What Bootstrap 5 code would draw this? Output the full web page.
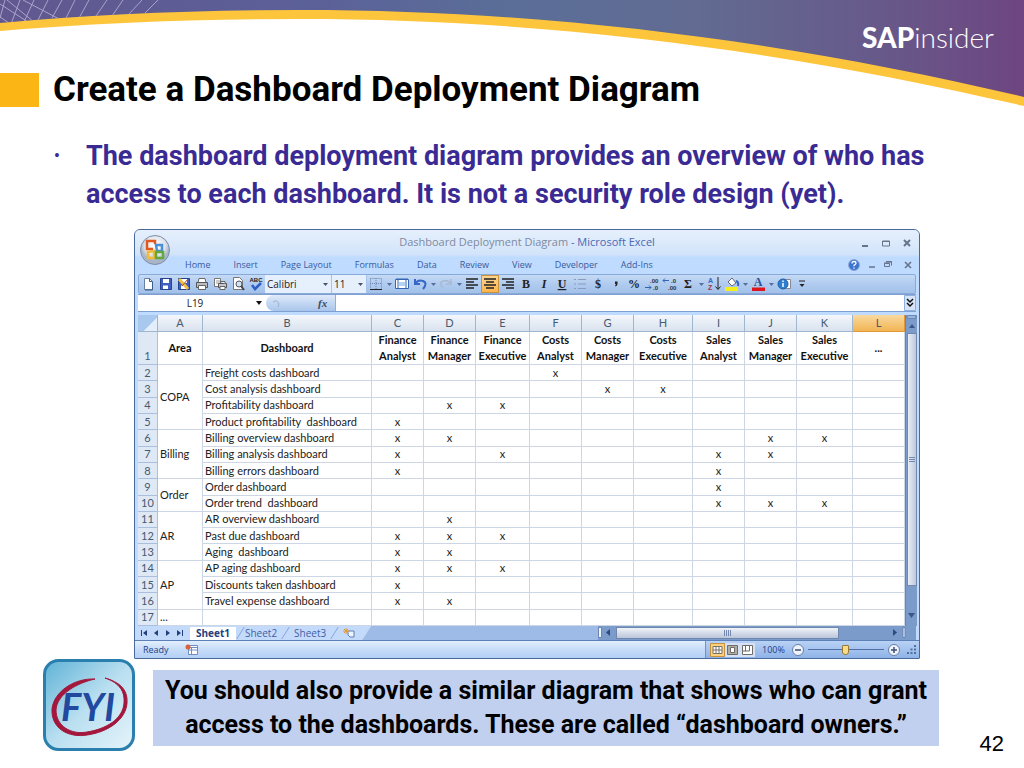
<!DOCTYPE html>
<html lang="en">
<head>
<meta charset="utf-8">
<meta name="viewport" content="width=device-width, initial-scale=1">
<title>Create a Dashboard Deployment Diagram</title>
<link href="https://cdn.jsdelivr.net/npm/bootstrap@5.3.0/dist/css/bootstrap.min.css" rel="stylesheet">
<style>
  :root { --head: Roboto, "Liberation Sans", sans-serif; --ui: "Open Sans", sans-serif; --sheet: Lato, sans-serif; --ink: #1f3f8a; }
  body { background: #fff; color: #000; font-family: var(--head); }
  .banner { position: absolute; top: 0; left: 0; width: 100%; height: 108px; z-index: -1; }
  .brand { height: 73px; padding: 16px 30px 0 0; font: 300 28px/42px Lato, sans-serif; }
  .brand strong { font-weight: 900; }
  .slide-title { font: bold 35px/34px var(--head); margin: 0 0 0 14px; }
  .title-block { width: 39px; height: 34px; background: #fbb615; }
  .points { padding: 30px 40px 0 86px; margin: 0 0 16px; color: #3a2b94; font: bold 27px/38px var(--head); list-style: none; }
  .points li::before { content: "•"; float: left; margin-left: -32px; font-size: 16px; }
  .excel { margin: 0 104px 0 134px; border: 1px solid #4a6a9c; border-radius: 6px 6px 1px 1px; background: #bfdbff; padding: 0 3px; color: var(--ink); font-family: var(--ui); }
  .excel button { border: 0; background: none; padding: 0; color: inherit; display: flex; align-items: center; justify-content: center; flex: none; }
  .excel svg { display: block; flex: none; }
  .caption-area { background: linear-gradient(#e6f0fc, #d2e4fa 55%, #bfdbff 62%); margin: 0 -3px; padding: 0 3px; border-radius: 5px 5px 0 0; }
  .win-title { height: 25px; font-size: 11px; color: #4a68b5; }
  .win-title span { color: #7e8aa0; }
  .orb { position: absolute; left: 4px; top: 4px; }
  .win-btns { position: absolute; right: 3px; top: 5px; gap: 3px; }
  .win-btns button { width: 18px; height: 16px; }
  .tabs { height: 19px; padding-left: 47px; gap: 23px; font-size: 9px; }
  .tabs a { color: #3a5a9c; text-decoration: none; }
  .tools { height: 20px; border: 1px solid #88aad8; border-radius: 2px; background: linear-gradient(#c5daf5, #b0cbef 50%, #a3c1e9); }
  .tools .tb { width: 18px; height: 18px; }
  .tools .dd { width: 8px; height: 18px; }
  .tools .on { background: linear-gradient(#fcd592, #fbb44d); border: 1px solid #c8923c; }
  .tools select { height: 18px; border: 0; border-right: 1px solid #a9c4ea; padding: 0 2px; appearance: none; border-radius: 0; font-size: 10px; color: #222; background: #e6f0fd url("data:image/svg+xml,%3Csvg xmlns='http://www.w3.org/2000/svg' width='5' height='3'%3E%3Cpath d='M0 0h5L2.500 3z' fill='%23456'/%3E%3C/svg%3E") no-repeat right 3px center; }
  .fbar { height: 18px; border: 1px solid #7e9fd0; border-width: 1px 0; background: #fff; }
  .fbar input { border: 0; padding: 0; font-size: 10px; color: #222; background: #fff; min-width: 0; }
  .fx { width: 70px; border-right: 1px solid #8fb0dd; border-radius: 9px 0 0 9px; background: linear-gradient(#dfeafa, #a9c5ec); padding: 0 4px 0 6px; }
  .sheet-area { margin-top: 3px; background: #fff; }
  .grid { table-layout: fixed; width: 100%; height: 311px; border-collapse: separate; border-spacing: 0; font: 11px/14px var(--sheet); color: #222; background: #fff; }
  .grid th, .grid td { padding: 0 2px; border: 0 solid #cdd6e4; border-width: 0 1px 1px 0; white-space: nowrap; }
  .grid thead th { height: 17px; background: linear-gradient(#f4f7fb, #d9e2ee); border-color: #9eb6ce; text-align: center; font-weight: normal; color: #465a70; }
  .grid thead th.sel { background: linear-gradient(#f9d99f, #f1b453); border-color: #e0963a; }
  .grid tbody th[scope=row] { background: #dfe9f6; border-color: #a9bfdd; text-align: center; font-weight: normal; color: #465a70; }
  .grid .heads { height: 32px; }
  .grid .heads th { padding: 0; text-align: center; font-weight: bold; color: #111; line-height: 16px; }
  .grid .heads th[scope=row] { vertical-align: bottom; font-weight: normal; color: #465a70; }
  .grid .hit { text-align: center; }
  .grid thead .corner { background: linear-gradient(135deg, #a9c8ee 62%, #e4eefb 63%); }
  .vscroll { width: 12px; background: #7b9bcb; border-left: 1px solid #6885b5; }
  .vthumb { width: 10px; height: 253px; background: linear-gradient(90deg, #e8edf5, #bcc9dc); border: 1px solid #7389ad; }
  .foot { height: 14px; background: #9dbbe6; font-size: 10px; }
  .foot nav { background: #c4dafa; height: 14px; clip-path: polygon(0 0, 100% 0, calc(100% - 9px) 100%, 0 100%); }
  .foot nav button { width: 12px; height: 14px; }
  .foot nav a { color: #3f5fa5; text-decoration: none; line-height: 13px; }
  .foot nav a.cur { background: #fff; font-weight: bold; color: #23407c; padding: 0 6px; }
  .foot nav i { width: 1px; height: 12px; background: #86a5d5; transform: skewX(-32deg); }
  .hscroll { width: 318px; background: #7b9bcb; }
  .hthumb { width: 223px; height: 12px; background: linear-gradient(#f0f3f8, #b9c6da); border: 1px solid #6f86ad; }
  .status { height: 18px; margin: 0 -3px; border-top: 1px solid #5c80b8; background: linear-gradient(#e3effe, #c7dcf8 50%, #b3cff5); font-size: 9px; }
  .zoomer { background: linear-gradient(#b9d2f5, #8fb3e8); border-left: 1px solid #6f93c9; width: 214px; gap: 7px; padding: 0 3px 0 4px; }
  .zoomer input { appearance: none; width: 76px; height: 1px; background: #4f6fa5; flex: none; }
  .zoomer input::-webkit-slider-thumb { appearance: none; width: 7px; height: 10px; background: #f7dc8a; border: 1px solid #9a7a35; border-radius: 1px 1px 3px 3px; }
  .note-row { padding-left: 43px; }
  .callout { background: #c0d0ee; font: bold 25px/34px var(--head); padding: 4px 0; margin: 11px 85px 0 18px; min-height: 76px; }
  .page-no { position: absolute; right: 20px; bottom: -6px; font: 22px/26px "Liberation Sans", sans-serif; }
</style>
</head>
<body>
<svg class="banner" viewBox="0 0 1024 108" preserveAspectRatio="none" aria-hidden="true">
  <defs>
    <linearGradient id="sky"><stop offset="0" stop-color="#61588f"/><stop offset=".28" stop-color="#5c5f98"/><stop offset=".5" stop-color="#5a6e98"/><stop offset=".68" stop-color="#626b92"/><stop offset=".86" stop-color="#67598a"/><stop offset="1" stop-color="#6e4580"/></linearGradient>
    <clipPath id="above"><path d="M0 0H1024V97C800 44 560 10 300 10Q140 10 0 23z"/></clipPath>
  </defs>
  <path d="M0 0H1024V100C800 47 560 13 300 13Q140 13 0 26z" fill="url(#sky)"/>
  <g clip-path="url(#above)" stroke="#a9a3cc" stroke-width="1" fill="none">
    <path d="M5 0L0 18M20 0L11 24M34 0L24 22M48 0L38 20M62 0L52 18M75 0L66 18M89 0L78 20M107 0L96 16M123 0L112 16M142 0L129 14M158 0L145 13M0 17L9 23M7 0L34 22M23 0L61 20M0 4L28 22"/>
  </g>
  <path d="M0 23Q140 10 300 10C560 10 800 44 1024 97V106C800 54 560 19 300 19Q140 19 0 31z" fill="#fdc53c"/>
</svg>

<header class="brand d-flex justify-content-end text-white"><div><strong>SAP</strong>insider</div></header>

<main>
  <div class="d-flex align-items-center">
    <div class="title-block"></div>
    <h1 class="slide-title">Create a Dashboard Deployment Diagram</h1>
  </div>
  <ul class="points"><li>The dashboard deployment diagram provides an overview of who has<br>access to each dashboard. It is not a security role design (yet).</li></ul>

  <section class="excel" aria-label="Dashboard Deployment Diagram workbook">
    <div class="caption-area position-relative">
      <svg class="orb" width="32" height="32" viewBox="0 0 32 32"><defs><radialGradient id="orbg" cy=".35"><stop offset="0" stop-color="#fff"/><stop offset=".7" stop-color="#dfe4ec"/><stop offset="1" stop-color="#a9b5c8"/></radialGradient></defs><circle cx="16" cy="16" r="14.500" fill="url(#orbg)" stroke="#7f8ea8"/><g fill="none" stroke-width="2.500"><path d="M14 15H8V7h8v3" stroke="#e2571c"/><path d="M17 11h6v6h-5z" stroke="#4a8fd6"/><path d="M15 17v7H9v-6z" stroke="#f2bb33"/><path d="M17 18h7v6h-7z" stroke="#62a83c"/></g></svg>
      <div class="win-title d-flex align-items-center justify-content-center"><div><span>Dashboard Deployment Diagram</span> - Microsoft Excel</div></div>
      <div class="win-btns d-flex">
        <button aria-label="Minimize"><svg width="8" height="8"><path d="M1 7h6" stroke="#66748c" stroke-width="2"/></svg></button>
        <button aria-label="Restore"><svg width="8" height="7"><path d="M.500 1h7v5h-7zM0 1.500h8" fill="none" stroke="#66748c"/></svg></button>
        <button aria-label="Close"><svg width="8" height="8"><path d="M1 1l6 6M7 1L1 7" stroke="#66748c" stroke-width="2"/></svg></button>
      </div>
      <div class="d-flex align-items-center">
        <nav class="tabs d-flex align-items-center flex-grow-1"><a href="#">Home</a><a href="#">Insert</a><a href="#">Page Layout</a><a href="#">Formulas</a><a href="#">Data</a><a href="#">Review</a><a href="#">View</a><a href="#">Developer</a><a href="#">Add-Ins</a></nav>
        <div class="d-flex gap-2 pe-1 align-items-center">
          <button aria-label="Help"><svg width="12" height="12"><circle cx="6" cy="6" r="5.500" fill="#3c74d0" stroke="#90a8d4"/><path d="M4 4.500q0-2 2-2t2 1.800q0 1-2 2v1M6 8.500v1.300" stroke="#fff" stroke-width="1.300" fill="none"/></svg></button>
          <button aria-label="Minimize workbook"><svg width="8" height="8"><path d="M1 6h6" stroke="#66748c" stroke-width="1.500"/></svg></button>
          <button aria-label="Restore workbook"><svg width="8" height="7"><path d="M.500 2.500h5v3h-5zM2 .500h5.500v4M0 2h6M2 1h6" fill="none" stroke="#66748c"/></svg></button>
          <button aria-label="Close workbook" class="ms-1"><svg width="8" height="8"><path d="M1 1l6 6M7 1L1 7" stroke="#66748c" stroke-width="1.600"/></svg></button>
        </div>
      </div>
    </div>

    <div class="tools d-flex align-items-center" id="tools"></div>

    <div class="fbar d-flex align-items-stretch">
      <input class="text-center" size="17" value="L19" aria-label="Name box">
      <button aria-label="Names" class="px-1"><svg width="6" height="4"><path d="M0 0h6L3 4z" fill="#111"/></svg></button>
      <div class="fx d-flex align-items-center justify-content-between"><svg width="9" height="9"><path d="M1 3q4-3 6 2l-1 3" fill="none" stroke="#9db1cf"/></svg><svg width="14" height="14" viewBox="0 0 14 14"><text x="1" y="11" font-family="Liberation Serif, serif" font-style="italic" font-weight="bold" font-size="11" fill="#3c4a60">fx</text></svg></div>
      <input class="flex-grow-1" aria-label="Formula">
      <button aria-label="Expand formula bar"><svg width="12" height="16"><path d="M.500 .500h11v15H.500z" fill="#d5e4f8" stroke="#8fb0dd"/><path d="M3 4l3 3 3-3M3 8l3 3 3-3" stroke="#111" stroke-width="1.500" fill="none"/></svg></button>
    </div>

    <div class="d-flex sheet-area">
      <table class="grid">
        <colgroup><col width="20"><col width="45"><col width="169"><col width="52"><col width="52"><col width="54"><col width="52"><col width="52"><col width="59"><col width="52"><col width="52"><col width="56"><col width="52"></colgroup>
        <thead><tr><th class="corner"></th><th>A</th><th>B</th><th>C</th><th>D</th><th>E</th><th>F</th><th>G</th><th>H</th><th>I</th><th>J</th><th>K</th><th class="sel">L</th></tr></thead>
        <tbody id="rows"><tr class="heads"><th scope="row">1</th><th>Area</th><th>Dashboard</th><th>Finance<br>Analyst</th><th>Finance<br>Manager</th><th>Finance<br>Executive</th><th>Costs<br>Analyst</th><th>Costs<br>Manager</th><th>Costs<br>Executive</th><th>Sales<br>Analyst</th><th>Sales<br>Manager</th><th>Sales<br>Executive</th><th>...</th></tr></tbody>
      </table>
      <div class="vscroll d-flex flex-column align-items-center flex-shrink-0">
        <svg width="11" height="18"><path d="M1 1h9v2H1z" fill="#e8f1fd" stroke="#5577aa"/><path d="M3 13h6L6 9z" fill="#3b568c"/></svg>
        <div class="vthumb d-flex align-items-center justify-content-center"><svg width="6" height="6"><path d="M0 .500h6M0 2.500h6M0 4.500h6" stroke="#7388ac"/></svg></div>
        <svg class="mt-auto mb-2" width="7" height="5"><path d="M0 0h7L3.500 5z" fill="#3b568c"/></svg>
      </div>
    </div>

    <div class="foot d-flex justify-content-between">
      <nav class="d-flex align-items-center gap-1 pe-3">
        <div class="d-flex">
          <button aria-label="First sheet"><svg width="7" height="6"><path d="M0 0h1v6H0zM6 0v6L2 3z" fill="#23407c"/></svg></button>
          <button aria-label="Previous sheet"><svg width="5" height="6"><path d="M4 0v6L0 3z" fill="#23407c"/></svg></button>
          <button aria-label="Next sheet"><svg width="5" height="6"><path d="M0 0v6l4-3z" fill="#23407c"/></svg></button>
          <button aria-label="Last sheet"><svg width="7" height="6"><path d="M5 0h1v6H5zM0 0v6l4-3z" fill="#23407c"/></svg></button>
        </div>
        <a href="#" class="cur">Sheet1</a><i></i><a href="#">Sheet2</a><i class="mx-1"></i><a href="#">Sheet3</a><i class="mx-1"></i>
        <button aria-label="Insert sheet"><svg width="13" height="11"><path d="M5 3h6v6H7l-2-2z" fill="#eef5ff" stroke="#5b7fb8"/><path d="M3 0v6M0 3h6M1 1l4 4M5 1L1 5" stroke="#e89a2c"/></svg></button>
      </nav>
      <div class="hscroll d-flex align-items-center">
        <svg width="18" height="14"><path d="M.500 1.500h3v10h-3z" fill="#eef5ff" stroke="#6885b5"/><path d="M12 3v7L8 6.500z" fill="#2f4a80"/></svg>
        <div class="hthumb d-flex align-items-center justify-content-center"><svg width="7" height="6"><path d="M.500 0v6M2.500 0v6M4.500 0v6M6.500 0v6" stroke="#7388ac"/></svg></div>
        <svg class="ms-auto me-2" width="17" height="14"><path d="M2 3v7l4-3.500z" fill="#2f4a80"/><path d="M12 1.500h2v10h-2z" fill="#eef5ff" stroke="#6885b5"/></svg>
      </div>
    </div>

    <div class="status d-flex justify-content-between align-items-stretch">
      <div class="d-flex align-items-center gap-3 ps-2"><span>Ready</span><button aria-label="Record macro"><svg width="13" height="11"><path d="M3.500 1.500h9v9h-9zM3 3.500h10M3 6h10M6.500 3v7" fill="#fff" stroke="#6f8fc4"/><circle cx="3" cy="3" r="2.500" fill="#d9603b"/></svg></button></div>
      <div class="zoomer d-flex align-items-center">
        <div class="d-flex">
          <button aria-label="Normal"><svg width="15" height="14"><path d="M.500 .500h14v13H.500z" fill="#fbd07e" stroke="#c8923c"/><path d="M3 3.500h9v7H3zM3 7h9M6 3v7M9 3v7" fill="#fff" stroke="#77726a"/></svg></button>
          <button aria-label="Page layout"><svg width="15" height="14"><path d="M0 0h15v14H0z" fill="#d5e2f5"/><path d="M2.500 2.500h10v9h-10z" fill="#b0ada6" stroke="#6f6d69"/><path d="M5.500 4.500h4v5h-4z" fill="#fff" stroke="#6f6d69"/></svg></button>
          <button aria-label="Page break"><svg width="15" height="14"><path d="M0 0h15v14H0z" fill="#d5e2f5"/><path d="M2.500 2.500h10v9h-10zM5.500 2v6H2M9.500 2v6H5" fill="#fff" stroke="#6f6d69"/></svg></button>
        </div>
        <span>100%</span>
        <div class="d-flex align-items-center">
          <button aria-label="Zoom out"><svg width="12" height="12"><circle cx="6" cy="6" r="5.500" fill="#eff4fb" stroke="#667fa8"/><path d="M3 6h6" stroke="#3c4f74" stroke-width="1.500"/></svg></button>
          <input type="range" value="50" aria-label="Zoom" class="mx-1">
          <button aria-label="Zoom in"><svg width="12" height="12"><circle cx="6" cy="6" r="5.500" fill="#eff4fb" stroke="#667fa8"/><path d="M3 6h6M6 3v6" stroke="#3c4f74" stroke-width="1.500"/></svg></button>
        </div>
        <svg class="ms-auto mt-auto mb-1" width="9" height="9" fill="#50709f"><path d="M7 0h2v2H7zM7 3.500h2v2H7zM3.500 3.500h2v2h-2zM7 7h2v2H7zM3.500 7h2v2h-2zM0 7h2v2H0z"/></svg>
      </div>
    </div>
  </section>

  <div class="d-flex align-items-start position-relative note-row">
    <svg class="flex-shrink-0" width="92" height="92" viewBox="0 0 92 92" role="img" aria-label="FYI">
      <defs><linearGradient id="fy" x1="0" y1="0" x2="1" y2="1"><stop offset="0" stop-color="#5fb2d6"/><stop offset=".5" stop-color="#b9dff0"/><stop offset="1" stop-color="#e6f4fa"/></linearGradient></defs>
      <rect x="1.500" y="1.500" width="89" height="89" rx="14" fill="url(#fy)" stroke="#2b7fae" stroke-width="3"/>
      <path d="M52 20C32 19 11 32 9 50C8 70 26 79 44 76C66 73 83 60 84 44C85 30 76 23 62 19C77 24 82 33 81 44C80 60 63 70 44 73C28 76 13 67 13 51C14 35 34 24 52 20z" fill="#a3173d" stroke="#a3173d" stroke-width="1"/>
      <text x="45" y="62" text-anchor="middle" font-family="Lato, sans-serif" font-weight="bold" font-style="italic" font-size="38" fill="#2149a0">FYI</text>
    </svg>
    <div class="callout flex-grow-1 text-center">You should also provide a similar diagram that shows who can grant<br>access to the dashboards. These are called “dashboard owners.”</div>
    <div class="page-no">42</div>
  </div>
</main>

<script>
  // Toolbar: [label, svg body, state]; a label alone is a small drop-down arrow
  const glyph = (t, extra) => `<text x="8" y="12" text-anchor="middle" font-family="Liberation Serif, serif" font-weight="bold" font-size="12" fill="#222" ${extra || ''}>${t}</text>`;
  const digits = (x, y, t) => `<text x="${x}" y="${y}" font-family="Liberation Sans, sans-serif" font-weight="bold" font-size="6" fill="#333">${t}</text>`;
  const page = '<path d="M4.500 2.500h5l3 3v8h-8z" fill="#fff" stroke="#6b7f9f"/><path d="M9.500 2.500v3h3M12.500 6v8H5" fill="none" stroke="#3d5d90"/>';
  const disk = '<path d="M2.500 2.500h11v11h-11z" fill="#3f5fc0" stroke="#27418f"/><path d="M5 3h6v4H5zM5 9.500h5V13H5z" fill="#fff"/>';
  const lines = d => `<path d="${d}" stroke="#222" stroke-width="1.500"/>`;
  const tools = [
    ['New', page], ['Save', disk], ['Save as', disk + '<path d="M3 3l9 10" stroke="#f0c040" stroke-width="3"/><path d="M12 3L6 10" stroke="#b24a2a"/>'],
    ['Print', '<path d="M5 2.500h6l1 4H4z" fill="#fff" stroke="#666"/><path d="M2.500 6.500h11v5h-11z" fill="#b9bcc3" stroke="#555"/><path d="M4.500 9.500h7v4h-7z" fill="#fff" stroke="#666"/>'],
    ['Quick print', '<path d="M2.500 2.500h6v8h-6z" fill="#fff" stroke="#777"/><path d="M4 5h4M4 7h4" stroke="#999"/><path d="M6.500 7.500h8v4h-8z" fill="#c4c7cd" stroke="#555"/><path d="M8 5.500h5v2M8 10.500h5v3H8z" fill="#fff" stroke="#666"/>'],
    ['Print preview', '<path d="M3.500 1.500h6l3 3v9h-9z" fill="#fff" stroke="#777"/><circle cx="9" cy="8" r="3" fill="#cfe4fa" stroke="#555"/><path d="M11 10l3 4" stroke="#444" stroke-width="2"/>'],
    ['Spelling', '<text x="8" y="6" text-anchor="middle" font-family="Liberation Sans, sans-serif" font-weight="bold" font-size="6" fill="#222">ABC</text><path d="M4 9l3 4 6-6" stroke="#2f5fc4" stroke-width="2.500" fill="none"/>'],
    ['select', 'Font', 'Calibri', 67], ['select', 'Size', '11', 35],
    ['Borders', '<path d="M2.500 2.500h11v10M2.500 2.500v10M8 2v11M2 7.500h12" stroke="#6f87b0" stroke-dasharray="1 1" fill="none"/><path d="M2 13.500h12" stroke="#222"/>'], ['Border styles'],
    ['Merge', '<path d="M1.500 3.500h13v9h-13z" fill="#fff" stroke="#3566b5"/><path d="M4 4v8M12 4v8M2 3h12" stroke="#3566b5"/><path d="M5 6h6v4H5z" fill="#b6d1f5"/>'],
    ['Undo', '<path d="M3 3v5h5M3 8q3-5 8-3t0 8" fill="none" stroke="#3566c8" stroke-width="2"/>'], ['Undo list'],
    ['Redo', '<path d="M13 3v5H8M13 8q-3-5-8-3t0 7" fill="none" stroke="#a9b9d2" stroke-width="1.500"/>'], ['Redo list'],
    ['Align left', lines('M2 3h12M2 6h8M2 9h12M2 12h8')], ['Center', lines('M2 3h12M4 6h8M2 9h12M4 12h8'), 'on'], ['Align right', lines('M2 3h12M6 6h8M2 9h12M6 12h8')],
    ['Bold', glyph('B')], ['Italic', glyph('I', 'font-style="italic"')], ['Underline', glyph('U', 'text-decoration="underline"')],
    ['Bullets', '<path d="M6 3.500h8M6 8h8M6 12.500h8M2 3.500h2M2 8h2M2 12.500h2" stroke="#8c9cb8"/>'],
    ['Currency', glyph('$')], ['Comma', '<path d="M7 5.500h2.500v2.500q0 1.500-2 2.500l-.500-.800q1-.600 1-1.400H7z" fill="#222"/>'], ['Percent', glyph('%')],
    ['Increase decimal', digits(6, 7, '.00') + digits(9, 14, '.0') + '<path d="M1 11.500h6M5 9.500l2 2-2 2" stroke="#3465b5" fill="none"/>'],
    ['Decrease decimal', digits(9, 7, '.0') + digits(6, 14, '.00') + '<path d="M1 4.500h6M3 2.500l-2 2 2 2" stroke="#3465b5" fill="none"/>'],
    ['Sum', glyph('Σ')], ['Sum list'],
    ['Sort', '<text x="2" y="7" font-family="Liberation Sans, sans-serif" font-size="7" font-weight="bold" fill="#3566c8">A</text><text x="2" y="14" font-family="Liberation Sans, sans-serif" font-size="7" font-weight="bold" fill="#a3354a">Z</text><path d="M12 1v12M9.500 10.500l2.500 3 2.500-3" stroke="#222" fill="none"/>'],
    ['Fill colour', '<path d="M4 6l4-4 4 5-4 3z" fill="#fff" stroke="#667"/><path d="M12 5q3 1 2 5" stroke="#3566c8" stroke-width="2" fill="none"/><path d="M1 11h13v4H1z" fill="#f7ee1e"/>'], ['Fill list'],
    ['Font colour', '<text x="8" y="10" text-anchor="middle" font-family="Liberation Serif, serif" font-weight="bold" font-size="12" fill="#2c4f96">A</text><path d="M2 11.500h13v3.500H2z" fill="#e0141c"/>'], ['Font colours'],
    ['Information', '<path d="M7.500 3.500h7v9h-7z" fill="#fff" stroke="#889"/><circle cx="7" cy="8" r="5" fill="#2f7fd0" stroke="#1f5faa"/><path d="M7 4.500v1.500M7 7v4" stroke="#fff" stroke-width="1.500"/>'],
    ['More', '<path d="M5 5h6" stroke="#222"/><path d="M5.500 8h5L8 11z" fill="#222"/>']
  ];
  document.getElementById('tools').innerHTML = tools.map(t => {
    if (t[0] === 'select') return `<select aria-label="${t[1]}" style="width:${t[3]}px"><option>${t[2]}</option></select>`;
    if (!t[1]) return `<button class="dd" aria-label="${t[0]}"><svg width="5" height="3"><path d="M0 0h5L2.500 3z" fill="#566f9c"/></svg></button>`;
    return `<button class="tb ${t[2] || ''}" aria-label="${t[0]}"><svg width="16" height="16" viewBox="0 0 16 16">${t[1]}</svg></button>`;
  }).join('');

  // Sheet rows: [dashboard, columns marked, area, rows the area spans]
  const rows = [
    ['Freight costs dashboard', 'F', 'COPA', 4], ['Cost analysis dashboard', 'GH'], ['Profitability dashboard', 'DE'], ['Product profitability\u00a0 dashboard', 'C'],
    ['Billing overview dashboard', 'CDJK', 'Billing', 3], ['Billing analysis dashboard', 'CEIJ'], ['Billing errors dashboard', 'CI'],
    ['Order dashboard', 'I', 'Order', 2], ['Order trend\u00a0 dashboard', 'IJK'],
    ['AR overview dashboard', 'D', 'AR', 3], ['Past due dashboard', 'CDE'], ['Aging\u00a0 dashboard', 'CD'],
    ['AP aging dashboard', 'CDE', 'AP', 3], ['Discounts taken dashboard', 'C'], ['Travel expense dashboard', 'CD'],
    ['', '', '...', 1]
  ];
  document.getElementById('rows').insertAdjacentHTML('beforeend', rows.map((r, i) =>
    `<tr><th scope="row">${i + 2}</th>${r[2] ? `<td rowspan="${r[3]}">${r[2]}</td>` : ''}<td>${r[0]}</td>` +
    [...'CDEFGHIJKL'].map(c => `<td class="hit">${r[1].includes(c) ? 'x' : ''}</td>`).join('') + '</tr>').join(''));
</script>
<script src="https://cdn.jsdelivr.net/npm/bootstrap@5.3.0/dist/js/bootstrap.bundle.min.js"></script>
</body>
</html>
